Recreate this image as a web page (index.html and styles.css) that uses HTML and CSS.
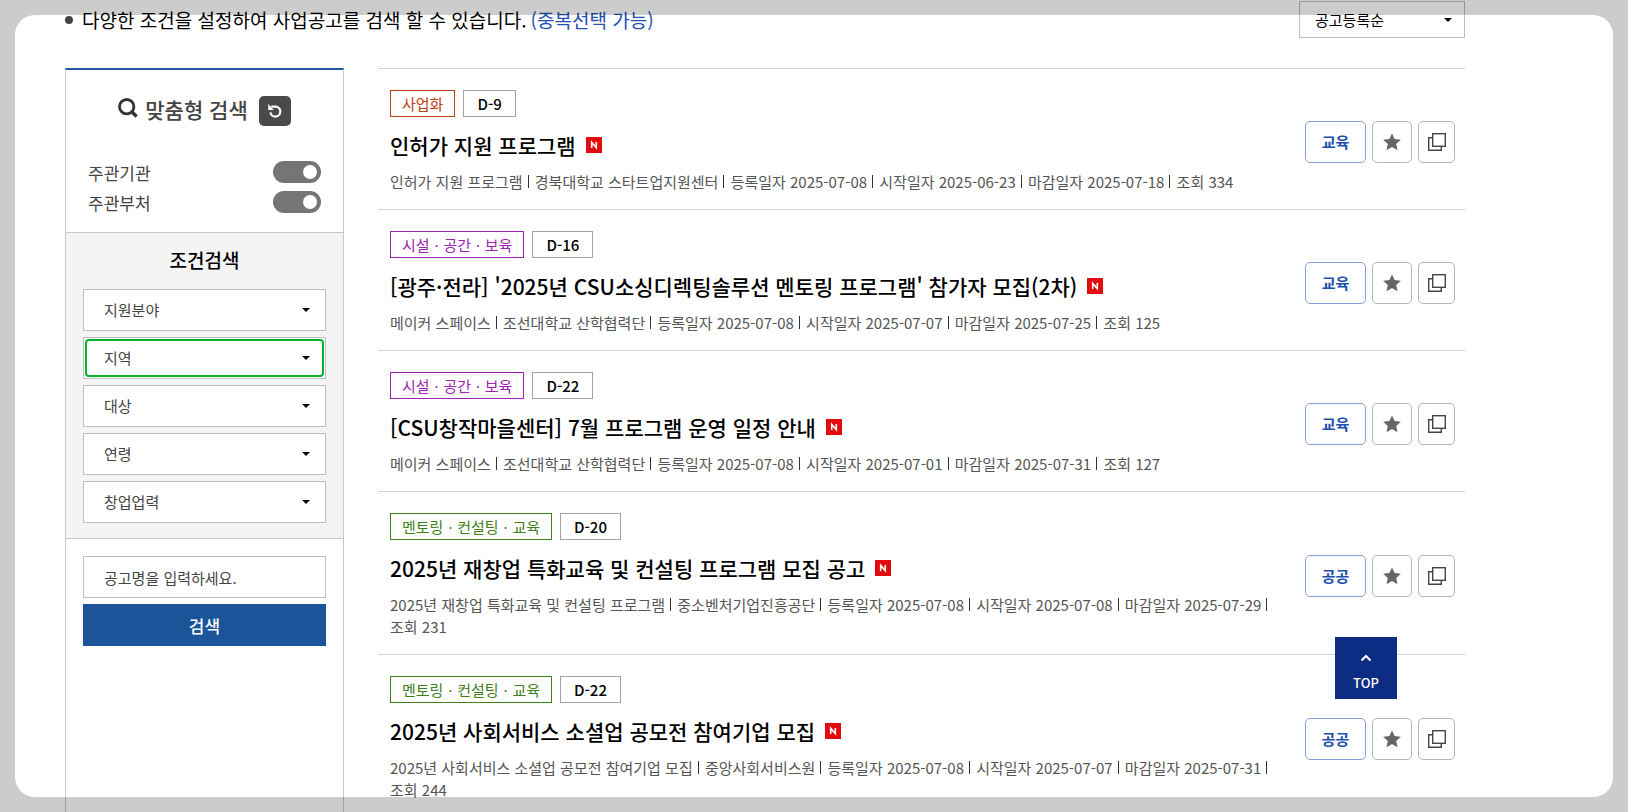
FILE: index.html
```html
<!DOCTYPE html>
<html lang="ko">
<head>
    <meta charset="UTF-8">
    <meta name="viewport" content="width=device-width, initial-scale=1.0">
    <title>사업공고</title>
    <link rel="stylesheet" href="styles.css">
</head>
<body>
    <!-- shared icons -->
    <svg class="sprite" aria-hidden="true">
        <symbol id="icon-new" viewBox="0 0 16 16">
            <rect width="16" height="16" fill="#e20c10"/>
            <path d="M5.7 11V5.4L10.3 10.6V5" fill="none" stroke="#fff" stroke-width="1.6"/>
        </symbol>
        <symbol id="icon-star" viewBox="0 0 18 18">
            <path d="M9 0.4l2.6 5.6 6.2.7-4.6 4.2 1.3 6.4L9 14l-5.5 3.3 1.3-6.4L.2 6.7 6.4 6z" fill="#666"/>
        </symbol>
        <symbol id="icon-copy" viewBox="0 0 18 18">
            <path d="M4 4.7H.7v12.6h12.6V14" fill="none" stroke="#444" stroke-width="1.4"/>
            <rect x="4.7" y=".7" width="12.6" height="12.6" fill="#fff" stroke="#444" stroke-width="1.4"/>
        </symbol>
    </svg>

    <div class="container">
        <header class="page-top">
            <p class="guide">다양한 조건을 설정하여 사업공고를 검색 할 수 있습니다. <span>(중복선택 가능)</span></p>
            <select class="sort" aria-label="정렬">
                <option>공고등록순</option>
            </select>
        </header>

        <main class="content">
            <form class="sidebar">
                <div class="custom">
                    <div class="custom-title">
                        <svg class="icon-search" viewBox="0 0 20 20" aria-hidden="true">
                            <circle cx="8.7" cy="8.7" r="7.2" fill="none" stroke="#333" stroke-width="2.8"/>
                            <path d="M13.8 13.8l4.8 4.6" stroke="#333" stroke-width="3.4"/>
                        </svg>
                        <h2>맞춤형 검색</h2>
                        <button type="reset" class="reset" aria-label="초기화">
                            <svg viewBox="0 0 16 16" aria-hidden="true">
                                <path d="M4.2 3.6H9A5 5 0 1 1 3.4 9.4" fill="none" stroke="#fff" stroke-width="2.2"/>
                                <path d="M1.2 1v6h5.6L4.6 4.8z" fill="#fff"/>
                            </svg>
                        </button>
                    </div>
                    <label class="toggle">주관기관<input type="checkbox" role="switch" checked></label>
                    <label class="toggle">주관부처<input type="checkbox" role="switch" checked></label>
                </div>

                <div class="filters">
                    <h3>조건검색</h3>
                    <div class="field"><select aria-label="지원분야"><option>지원분야</option></select></div>
                    <div class="field active"><select aria-label="지역"><option>지역</option></select></div>
                    <div class="field"><select aria-label="대상"><option>대상</option></select></div>
                    <div class="field"><select aria-label="연령"><option>연령</option></select></div>
                    <div class="field"><select aria-label="창업업력"><option>창업업력</option></select></div>
                </div>

                <div class="keyword">
                    <input type="text" placeholder="공고명을 입력하세요." aria-label="공고명">
                    <button type="submit">검색</button>
                </div>
            </form>

            <ul class="notices">
                <li>
                    <div class="info">
                        <div class="tags"><span class="tag biz">사업화</span><span class="tag day">D-9</span></div>
                        <a href="#" class="title">인허가 지원 프로그램<svg class="new" role="img" aria-label="새글"><use href="#icon-new"/></svg></a>
                        <p class="meta"><span>인허가 지원 프로그램</span> <span>경북대학교 스타트업지원센터</span> <span>등록일자 2025-07-08</span> <span>시작일자 2025-06-23</span> <span>마감일자 2025-07-18</span> <span>조회 334</span></p>
                    </div>
                    <div class="actions">
                        <button type="button" class="kind">교육</button>
                        <button type="button" class="star" aria-label="관심공고"><svg><use href="#icon-star"/></svg></button>
                        <button type="button" class="copy" aria-label="새창"><svg><use href="#icon-copy"/></svg></button>
                    </div>
                </li>
                <li>
                    <div class="info">
                        <div class="tags"><span class="tag space">시설ㆍ공간ㆍ보육</span><span class="tag day">D-16</span></div>
                        <a href="#" class="title">[광주·전라] '2025년 CSU소싱디렉팅솔루션 멘토링 프로그램' 참가자 모집(2차)<svg class="new" role="img" aria-label="새글"><use href="#icon-new"/></svg></a>
                        <p class="meta"><span>메이커 스페이스</span> <span>조선대학교 산학협력단</span> <span>등록일자 2025-07-08</span> <span>시작일자 2025-07-07</span> <span>마감일자 2025-07-25</span> <span>조회 125</span></p>
                    </div>
                    <div class="actions">
                        <button type="button" class="kind">교육</button>
                        <button type="button" class="star" aria-label="관심공고"><svg><use href="#icon-star"/></svg></button>
                        <button type="button" class="copy" aria-label="새창"><svg><use href="#icon-copy"/></svg></button>
                    </div>
                </li>
                <li>
                    <div class="info">
                        <div class="tags"><span class="tag space">시설ㆍ공간ㆍ보육</span><span class="tag day">D-22</span></div>
                        <a href="#" class="title">[CSU창작마을센터] 7월 프로그램 운영 일정 안내<svg class="new" role="img" aria-label="새글"><use href="#icon-new"/></svg></a>
                        <p class="meta"><span>메이커 스페이스</span> <span>조선대학교 산학협력단</span> <span>등록일자 2025-07-08</span> <span>시작일자 2025-07-01</span> <span>마감일자 2025-07-31</span> <span>조회 127</span></p>
                    </div>
                    <div class="actions">
                        <button type="button" class="kind">교육</button>
                        <button type="button" class="star" aria-label="관심공고"><svg><use href="#icon-star"/></svg></button>
                        <button type="button" class="copy" aria-label="새창"><svg><use href="#icon-copy"/></svg></button>
                    </div>
                </li>
                <li>
                    <div class="info">
                        <div class="tags"><span class="tag mentor">멘토링ㆍ컨설팅ㆍ교육</span><span class="tag day">D-20</span></div>
                        <a href="#" class="title">2025년 재창업 특화교육 및 컨설팅 프로그램 모집 공고<svg class="new" role="img" aria-label="새글"><use href="#icon-new"/></svg></a>
                        <p class="meta"><span>2025년 재창업 특화교육 및 컨설팅 프로그램</span> <span>중소벤처기업진흥공단</span> <span>등록일자 2025-07-08</span> <span>시작일자 2025-07-08</span> <span>마감일자 2025-07-29</span> <span>조회 231</span></p>
                    </div>
                    <div class="actions">
                        <button type="button" class="kind">공공</button>
                        <button type="button" class="star" aria-label="관심공고"><svg><use href="#icon-star"/></svg></button>
                        <button type="button" class="copy" aria-label="새창"><svg><use href="#icon-copy"/></svg></button>
                    </div>
                </li>
                <li>
                    <div class="info">
                        <div class="tags"><span class="tag mentor">멘토링ㆍ컨설팅ㆍ교육</span><span class="tag day">D-22</span></div>
                        <a href="#" class="title">2025년 사회서비스 소셜업 공모전 참여기업 모집<svg class="new" role="img" aria-label="새글"><use href="#icon-new"/></svg></a>
                        <p class="meta"><span>2025년 사회서비스 소셜업 공모전 참여기업 모집</span> <span>중앙사회서비스원</span> <span>등록일자 2025-07-08</span> <span>시작일자 2025-07-07</span> <span>마감일자 2025-07-31</span> <span>조회 244</span></p>
                    </div>
                    <div class="actions">
                        <button type="button" class="kind">공공</button>
                        <button type="button" class="star" aria-label="관심공고"><svg><use href="#icon-star"/></svg></button>
                        <button type="button" class="copy" aria-label="새창"><svg><use href="#icon-copy"/></svg></button>
                    </div>
                </li>
            </ul>
        </main>
    </div>

    <a href="#" class="top-button">
        <svg viewBox="0 0 12 8" aria-hidden="true"><path d="M1.5 6.5L6 2l4.5 4.5" fill="none" stroke="#fff" stroke-width="2"/></svg>
        TOP
    </a>
    <div class="frame"></div>
</body>
</html>
```
FILE: styles.css
```css
* {
    box-sizing: border-box;
}

body {
    margin: 0;
    height: 100vh;
    overflow: hidden;
    background-color: #fff;
    color: #000;
    font-family: "Noto Sans CJK KR", "Noto Sans", sans-serif;
    font-size: 15px;
}

h2, h3, p, ul {
    margin: 0;
    padding: 0;
}

button, input, select {
    font-family: inherit;
    font-size: 15px;
    margin: 0;
}

button {
    cursor: pointer;
}

.sprite {
    position: absolute;
    width: 0;
    height: 0;
}

.container {
    display: flex;
    flex-direction: column;
    min-height: 100vh;
    max-width: 1465px;
    padding-left: 65px;
}

/* guide text and sort order */
.page-top {
    display: flex;
    justify-content: space-between;
    align-items: center;
    padding-top: 1px;
    margin-bottom: 30px;
}

.guide {
    display: flex;
    align-items: center;
    gap: 4px;
    font-size: 19px;
    line-height: 28px;
}

.guide::before {
    content: "";
    width: 8px;
    height: 8px;
    margin-right: 5px;
    border-radius: 50%;
    background-color: #444;
}

.guide span {
    color: #2350b5;
}

select {
    appearance: none;
    border: 1px solid #bfbfbf;
    border-radius: 0;
    background: #fff url("data:image/svg+xml,%3Csvg xmlns='http://www.w3.org/2000/svg' width='8' height='4'%3E%3Cpath d='M0 0h8L4 4z'/%3E%3C/svg%3E") no-repeat right 15px center;
    color: #444;
}

.sort {
    width: 166px;
    height: 37px;
    padding: 0 15px;
    background-position: right 12px center;
    color: #000;
}

.content {
    display: flex;
    flex: 1;
    gap: 34px;
}

/* left search box */
.sidebar {
    flex: 0 0 279px;
    border: 1px solid #c8c8c8;
    border-top: 2px solid #235a9f;
}

.custom {
    height: 162px;
    padding: 24px 22px 0;
}

.custom-title {
    display: flex;
    justify-content: center;
    align-items: flex-start;
    gap: 7px;
    margin-bottom: 31px;
}

.custom-title h2 {
    font-size: 21px;
    font-weight: 500;
    line-height: 30px;
    color: #444;
}

.icon-search {
    width: 20px;
    height: 20px;
    margin-top: 4px;
}

.reset {
    display: flex;
    align-items: center;
    justify-content: center;
    width: 32px;
    height: 30px;
    margin: 2px 0 0 4px;
    padding: 0;
    border: none;
    border-radius: 5px;
    background-color: #4a4a4a;
}

.reset svg {
    width: 16px;
    height: 16px;
}

.toggle {
    display: flex;
    justify-content: space-between;
    align-items: center;
    height: 30px;
    font-size: 17px;
    color: #444;
}

.toggle input {
    appearance: none;
    display: flex;
    justify-content: flex-end;
    width: 48px;
    height: 22px;
    padding: 4px;
    border-radius: 11px;
    background-color: #757575;
}

.toggle input::before {
    content: "";
    width: 14px;
    height: 14px;
    border-radius: 50%;
    background-color: #fff;
}

.filters {
    display: flex;
    flex-direction: column;
    gap: 6px;
    padding: 13px 17px 15px;
    border-top: 1px solid #c8c8c8;
    border-bottom: 1px solid #c8c8c8;
    background-color: #f4f4f4;
}

.filters h3 {
    margin-bottom: 9px;
    font-size: 19px;
    font-weight: 500;
    line-height: 28px;
    text-align: center;
}

.field {
    position: relative;
}

.field select {
    display: block;
    width: 100%;
    height: 42px;
    padding: 0 20px 2px;
}

/* ring inside the selected field */
.field.active::after {
    content: "";
    position: absolute;
    inset: 2px;
    border: 2px solid #09b32b;
    border-radius: 4px;
    pointer-events: none;
}

.keyword {
    display: flex;
    flex-direction: column;
    gap: 6px;
    padding: 17px;
}

.keyword input {
    height: 42px;
    padding: 0 20px;
    border: 1px solid #bfbfbf;
}

.keyword input::placeholder {
    color: #444;
}

.keyword button {
    height: 42px;
    border: none;
    background-color: #1b5499;
    color: #fff;
    font-size: 17px;
    font-weight: 500;
}

/* notice list */
.notices {
    flex: 1;
    list-style-type: none;
}

.notices li {
    display: flex;
    justify-content: space-between;
    align-items: center;
    gap: 30px;
    padding: 21px 10px 16px 12px;
    border-top: 1px solid #d3d3d3;
}

.tags {
    display: flex;
    gap: 8px;
    margin-bottom: 12px;
}

.tag {
    height: 27px;
    padding: 0 11px;
    border: 1px solid #a2a2aa;
    line-height: 25px;
}

.tag.biz {
    border-color: #bf4014;
    color: #bf4014;
}

.tag.space {
    border-color: #9e22b5;
    color: #9e22b5;
}

.tag.mentor {
    border-color: #40801a;
    color: #40801a;
}

.tag.day {
    padding: 0 13px;
    font-weight: 500;
}

.title {
    display: flex;
    align-items: center;
    gap: 10px;
    margin-bottom: 10px;
    color: #000;
    font-size: 21px;
    font-weight: 500;
    line-height: 32px;
    text-decoration: none;
}

.title:hover {
    text-decoration: underline;
}

.new {
    width: 16px;
    height: 16px;
}

.meta {
    color: #555;
    line-height: 22px;
}

.meta span {
    display: inline-block;
}

.meta span:not(:last-child)::after {
    content: "";
    display: inline-block;
    width: 1px;
    height: 13px;
    margin: 0 2px 0 5px;
    background-color: #333;
}

.actions {
    display: flex;
    flex-shrink: 0;
    gap: 6px;
}

.actions button {
    display: flex;
    align-items: center;
    justify-content: center;
    height: 42px;
    padding: 0;
    border: 1px solid #b5b5b5;
    border-radius: 5px;
    background-color: #fff;
}

.actions svg {
    width: 18px;
    height: 18px;
}

.actions .kind {
    width: 61px;
    border-color: #83a2dc;
    color: #204fae;
    font-weight: 700;
}

.actions .star {
    width: 40px;
}

.actions .copy {
    width: 37px;
}

.top-button {
    position: fixed;
    right: 231px;
    bottom: 113px;
    display: flex;
    flex-direction: column;
    align-items: center;
    gap: 11px;
    width: 62px;
    height: 62px;
    padding-top: 17px;
    background-color: #0d2c84;
    color: #fff;
    font-size: 13px;
    font-weight: 500;
    line-height: 20px;
    text-decoration: none;
}

.top-button svg {
    width: 12px;
    height: 8px;
}

/* dimmed edge around the window */
.frame {
    position: fixed;
    inset: 15px;
    border-radius: 20px;
    box-shadow: 0 0 0 40px rgba(0, 0, 0, 0.2);
    pointer-events: none;
}
```
